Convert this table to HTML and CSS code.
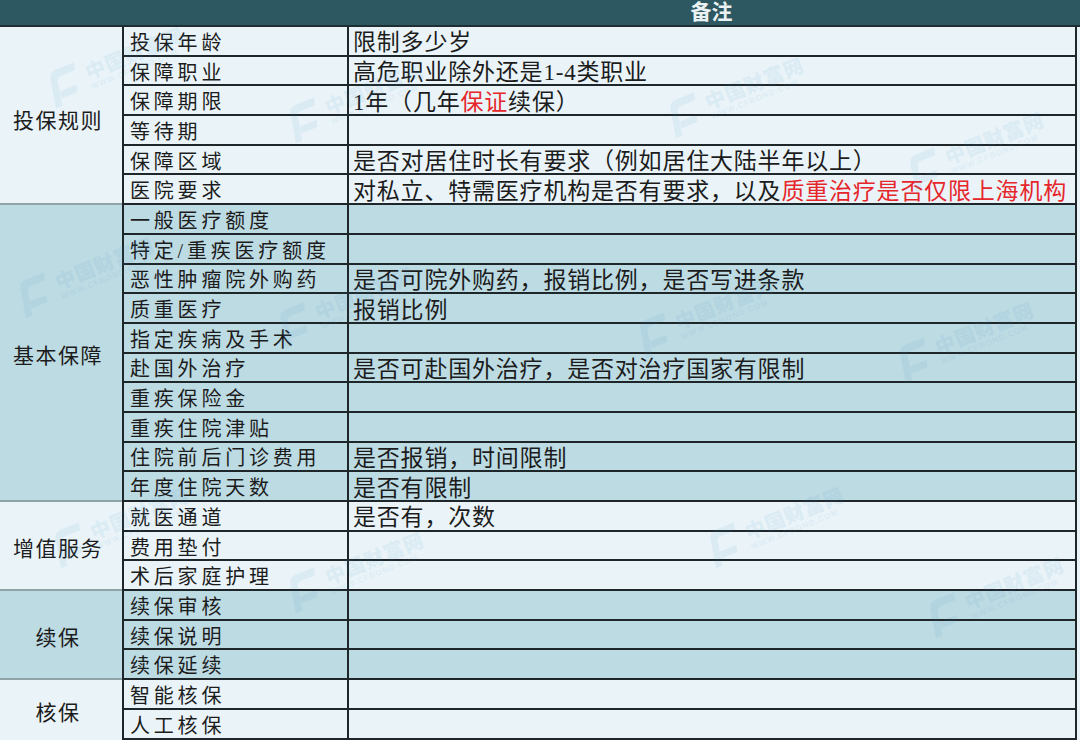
FILE: index.html
```html
<!DOCTYPE html>
<html lang="zh-CN">
<head>
<meta charset="utf-8">
<title>备注</title>
<link rel="stylesheet" href="styles.css">
</head>
<body>
<div class="page">
  <div class="sheet">
    <div class="hd"></div>
    <div class="hd"></div>
    <div class="hd hd-title"><span class="hd-text">备注</span></div>

    <div class="grp light span6 first">投保规则</div>
    <div class="item light">投保年龄</div><div class="note light">限制多少岁</div>
    <div class="item light">保障职业</div><div class="note light">高危职业除外还是1-4类职业</div>
    <div class="item light">保障期限</div><div class="note light">1年（几年<span class="red">保证</span>续保）</div>
    <div class="item light">等待期</div><div class="note light"></div>
    <div class="item light">保障区域</div><div class="note light">是否对居住时长有要求（例如居住大陆半年以上）</div>
    <div class="item light">医院要求</div><div class="note light">对私立、特需医疗机构是否有要求，以及<span class="red">质重治疗是否仅限上海机构</span></div>

    <div class="grp dark span10">基本保障</div>
    <div class="item dark">一般医疗额度</div><div class="note dark"></div>
    <div class="item dark">特定/重疾医疗额度</div><div class="note dark"></div>
    <div class="item dark">恶性肿瘤院外购药</div><div class="note dark">是否可院外购药，报销比例，是否写进条款</div>
    <div class="item dark">质重医疗</div><div class="note dark">报销比例</div>
    <div class="item dark">指定疾病及手术</div><div class="note dark"></div>
    <div class="item dark">赴国外治疗</div><div class="note dark">是否可赴国外治疗，是否对治疗国家有限制</div>
    <div class="item dark">重疾保险金</div><div class="note dark"></div>
    <div class="item dark">重疾住院津贴</div><div class="note dark"></div>
    <div class="item dark">住院前后门诊费用</div><div class="note dark">是否报销，时间限制</div>
    <div class="item dark">年度住院天数</div><div class="note dark">是否有限制</div>

    <div class="grp light span3">增值服务</div>
    <div class="item light">就医通道</div><div class="note light">是否有，次数</div>
    <div class="item light">费用垫付</div><div class="note light"></div>
    <div class="item light">术后家庭护理</div><div class="note light"></div>

    <div class="grp dark span3">续保</div>
    <div class="item dark">续保审核</div><div class="note dark"></div>
    <div class="item dark">续保说明</div><div class="note dark"></div>
    <div class="item dark">续保延续</div><div class="note dark"></div>

    <div class="grp light span2 last">核保</div>
    <div class="item light">智能核保</div><div class="note light"></div>
    <div class="item light">人工核保</div><div class="note light"></div>
  </div>

  <div class="marks" aria-hidden="true">
    <div class="wm wm1"><svg class="wm-logo" viewBox="0 0 40 40"><path d="M4 38 L10 8 Q12 2 18 2 L38 2 L36 10 L20 10 Q17 10 16 13 L11 38 Z M14 24 L32 24 L30 31 L13 31 Z"/></svg><div class="wm-text"><span class="wm-cn">中国财富网</span><span class="wm-en">WWW.CFBOND.COM</span></div></div>
    <div class="wm wm2"><svg class="wm-logo" viewBox="0 0 40 40"><path d="M4 38 L10 8 Q12 2 18 2 L38 2 L36 10 L20 10 Q17 10 16 13 L11 38 Z M14 24 L32 24 L30 31 L13 31 Z"/></svg><div class="wm-text"><span class="wm-cn">中国财富网</span><span class="wm-en">WWW.CFBOND.COM</span></div></div>
    <div class="wm wm3"><svg class="wm-logo" viewBox="0 0 40 40"><path d="M4 38 L10 8 Q12 2 18 2 L38 2 L36 10 L20 10 Q17 10 16 13 L11 38 Z M14 24 L32 24 L30 31 L13 31 Z"/></svg><div class="wm-text"><span class="wm-cn">中国财富网</span><span class="wm-en">WWW.CFBOND.COM</span></div></div>
    <div class="wm wm4"><svg class="wm-logo" viewBox="0 0 40 40"><path d="M4 38 L10 8 Q12 2 18 2 L38 2 L36 10 L20 10 Q17 10 16 13 L11 38 Z M14 24 L32 24 L30 31 L13 31 Z"/></svg><div class="wm-text"><span class="wm-cn">中国财富网</span><span class="wm-en">WWW.CFBOND.COM</span></div></div>
    <div class="wm wm5"><svg class="wm-logo" viewBox="0 0 40 40"><path d="M4 38 L10 8 Q12 2 18 2 L38 2 L36 10 L20 10 Q17 10 16 13 L11 38 Z M14 24 L32 24 L30 31 L13 31 Z"/></svg><div class="wm-text"><span class="wm-cn">中国财富网</span><span class="wm-en">WWW.CFBOND.COM</span></div></div>
    <div class="wm wm6"><svg class="wm-logo" viewBox="0 0 40 40"><path d="M4 38 L10 8 Q12 2 18 2 L38 2 L36 10 L20 10 Q17 10 16 13 L11 38 Z M14 24 L32 24 L30 31 L13 31 Z"/></svg><div class="wm-text"><span class="wm-cn">中国财富网</span><span class="wm-en">WWW.CFBOND.COM</span></div></div>
    <div class="wm wm7"><svg class="wm-logo" viewBox="0 0 40 40"><path d="M4 38 L10 8 Q12 2 18 2 L38 2 L36 10 L20 10 Q17 10 16 13 L11 38 Z M14 24 L32 24 L30 31 L13 31 Z"/></svg><div class="wm-text"><span class="wm-cn">中国财富网</span><span class="wm-en">WWW.CFBOND.COM</span></div></div>
    <div class="wm wm8"><svg class="wm-logo" viewBox="0 0 40 40"><path d="M4 38 L10 8 Q12 2 18 2 L38 2 L36 10 L20 10 Q17 10 16 13 L11 38 Z M14 24 L32 24 L30 31 L13 31 Z"/></svg><div class="wm-text"><span class="wm-cn">中国财富网</span><span class="wm-en">WWW.CFBOND.COM</span></div></div>
    <div class="wm wm9"><svg class="wm-logo" viewBox="0 0 40 40"><path d="M4 38 L10 8 Q12 2 18 2 L38 2 L36 10 L20 10 Q17 10 16 13 L11 38 Z M14 24 L32 24 L30 31 L13 31 Z"/></svg><div class="wm-text"><span class="wm-cn">中国财富网</span><span class="wm-en">WWW.CFBOND.COM</span></div></div>
    <div class="wm wm10"><svg class="wm-logo" viewBox="0 0 40 40"><path d="M4 38 L10 8 Q12 2 18 2 L38 2 L36 10 L20 10 Q17 10 16 13 L11 38 Z M14 24 L32 24 L30 31 L13 31 Z"/></svg><div class="wm-text"><span class="wm-cn">中国财富网</span><span class="wm-en">WWW.CFBOND.COM</span></div></div>
    <div class="wm wm11"><svg class="wm-logo" viewBox="0 0 40 40"><path d="M4 38 L10 8 Q12 2 18 2 L38 2 L36 10 L20 10 Q17 10 16 13 L11 38 Z M14 24 L32 24 L30 31 L13 31 Z"/></svg><div class="wm-text"><span class="wm-cn">中国财富网</span><span class="wm-en">WWW.CFBOND.COM</span></div></div>
    <div class="wm wm12"><svg class="wm-logo" viewBox="0 0 40 40"><path d="M4 38 L10 8 Q12 2 18 2 L38 2 L36 10 L20 10 Q17 10 16 13 L11 38 Z M14 24 L32 24 L30 31 L13 31 Z"/></svg><div class="wm-text"><span class="wm-cn">中国财富网</span><span class="wm-en">WWW.CFBOND.COM</span></div></div>
  </div>
</div>
</body>
</html>
```

FILE: styles.css
```css
html, body {
  margin: 0;
  padding: 0;
  background: #eaf4f8;
}

.page {
  position: relative;
  width: 1080px;
  height: 740px;
  overflow: hidden;
  font-family: "Liberation Serif", "Noto Sans CJK SC", serif;
  color: #1c1c1c;
}

.sheet {
  display: grid;
  grid-template-columns: 122px 225px 733px;
  grid-template-rows: 27px repeat(24, 29.7px);
}

.hd {
  background: #2d5761;
  border-bottom: 2px solid #1d2f33;
  box-sizing: border-box;
}

.hd-title {
  display: flex;
  align-items: center;
  justify-content: center;
  padding-right: 4px;
}

.hd-text {
  color: #e9f1f2;
  font-size: 21px;
  font-weight: 700;
  line-height: 23px;
}

.light { background: #eaf4f8; }
.dark { background: #bddbe3; }

.grp {
  grid-column: 1;
  display: flex;
  align-items: center;
  justify-content: center;
  font-size: 21px;
  letter-spacing: 1.5px;
  border-bottom: 2px solid #8fa3a8;
  box-sizing: border-box;
  padding-right: 6px;
  padding-top: 3px;
}
.grp.first { padding-top: 8px; }
.grp.last { border-bottom: none; }
.span6 { grid-row: span 6; }
.span10 { grid-row: span 10; }
.span3 { grid-row: span 3; }
.span2 { grid-row: span 2; }

.item, .note {
  box-sizing: border-box;
  border-bottom: 2px solid #1f2629;
  border-left: 2px solid #1f2629;
  display: flex;
  align-items: center;
  white-space: nowrap;
  line-height: 1;
  padding-top: 4px;
}

.item {
  grid-column: 2;
  padding-left: 6px;
  font-size: 20px;
  letter-spacing: 3.8px;
}

.note {
  grid-column: 3;
  padding-left: 4px;
  font-size: 23px;
  letter-spacing: 0.8px;
  border-right: 2px solid #1f2629;
  margin-right: 3px;
}

.red { color: #e6262b; }

/* watermark overlay */
.marks {
  position: absolute;
  inset: 0;
  pointer-events: none;
}

.wm {
  position: absolute;
  display: flex;
  align-items: center;
  gap: 5px;
  transform: rotate(-22deg);
  opacity: 0.08;
  color: #3d8fd0;
}

.wm-logo {
  width: 40px;
  height: 40px;
  fill: #3d8fd0;
}

.wm-text {
  display: flex;
  flex-direction: column;
  font-family: "Noto Sans CJK SC", sans-serif;
}

.wm-cn {
  font-size: 20px;
  font-weight: 900;
  letter-spacing: 1px;
  line-height: 1.1;
}

.wm-en {
  font-family: "Liberation Sans", sans-serif;
  font-size: 8px;
  font-weight: 700;
  letter-spacing: 1px;
}

.wm1 { left: 40px; top: 45px; }
.wm2 { left: 280px; top: 80px; }
.wm3 { left: 660px; top: 75px; }
.wm4 { left: 900px; top: 130px; }
.wm5 { left: 10px; top: 255px; }
.wm6 { left: 270px; top: 285px; }
.wm7 { left: 630px; top: 295px; }
.wm8 { left: 890px; top: 320px; }
.wm9 { left: 45px; top: 505px; }
.wm10 { left: 280px; top: 550px; }
.wm11 { left: 700px; top: 505px; }
.wm12 { left: 920px; top: 575px; }
```
